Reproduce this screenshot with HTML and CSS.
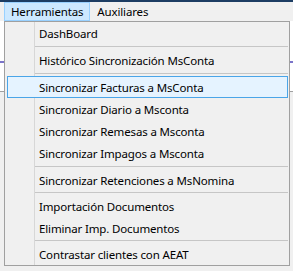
FILE: index.html
```html
<!DOCTYPE html>
<html lang="es">
<head>
<meta charset="utf-8">
<title>Menú Herramientas</title>
<link rel="stylesheet" href="styles.css">
</head>
<body>
<div class="window">
  <div class="titlebar"></div>
  <div class="menubar">
    <span class="mb-item active">Herramientas</span>
    <span class="mb-item">Auxiliares</span>
  </div>
  <div class="workspace">
    <div class="panel">
      <div class="rule"></div>
    </div>
  </div>
  <ul class="dropdown">
    <li class="item">DashBoard</li>
    <li class="sep"></li>
    <li class="item">Histórico Sincronización MsConta</li>
    <li class="sep"></li>
    <li class="item hot">Sincronizar Facturas a MsConta</li>
    <li class="item">Sincronizar Diario a Msconta</li>
    <li class="item">Sincronizar Remesas a Msconta</li>
    <li class="item">Sincronizar Impagos a Msconta</li>
    <li class="sep"></li>
    <li class="item">Sincronizar Retenciones a MsNomina</li>
    <li class="sep short"></li>
    <li class="item">Importación Documentos</li>
    <li class="item">Eliminar Imp. Documentos</li>
    <li class="sep short"></li>
    <li class="item">Contrastar clientes con AEAT</li>
  </ul>
</div>
</body>
</html>
```
FILE: styles.css
```css
html, body {
  margin: 0;
  padding: 0;
}

body {
  width: 293px;
  height: 271px;
  overflow: hidden;
  background: #ffffff;
  font-family: "Noto Sans", "Open Sans", "DejaVu Sans", sans-serif;
  font-size: 11.5px;
  letter-spacing: -0.15px;
  color: #000000;
}

.window {
  position: relative;
  width: 293px;
  height: 271px;
}

.titlebar {
  height: 2px;
  background: #1d3d63;
}

.menubar {
  display: flex;
  height: 19px;
  padding-left: 4px;
  background: #f0f0f0;
}

.mb-item {
  height: 17px;
  line-height: 17px;
  padding: 0 6px;
  border: 1px solid transparent;
  white-space: nowrap;
}

.mb-item.active {
  background: #cce8ff;
  border-color: #99d1ff;
}

.workspace {
  height: 250px;
  background: #f0f0f0;
}

.panel {
  height: 71px;
  padding-top: 40px;
  box-sizing: border-box;
  background: #ffffff;
  border-bottom: 1px solid #a0a0a0;
}

.rule {
  height: 2px;
  background: #7b74c9;
}

.dropdown {
  position: absolute;
  left: 4px;
  top: 21px;
  width: 284px;
  margin: 0;
  padding: 0;
  list-style: none;
  border: 1px solid #a0a0a0;
  background:
    linear-gradient(to right, transparent 29px, #d7d7d7 29px, #d7d7d7 30px, transparent 30px),
    #f0f0f0;
}

.item {
  height: 20px;
  line-height: 21px;
  margin: 0 1px 0 2px;
  padding-left: 31px;
  border: 1px solid transparent;
  white-space: nowrap;
}

.item.hot {
  background: #e5f3ff;
  border-color: #4aa5e8;
}

.sep {
  height: 0;
  margin: 2px 1px 2px 30px;
  border-top: 1px solid #c6c6c6;
}

.sep.short {
  margin-top: 1px;
}
```
